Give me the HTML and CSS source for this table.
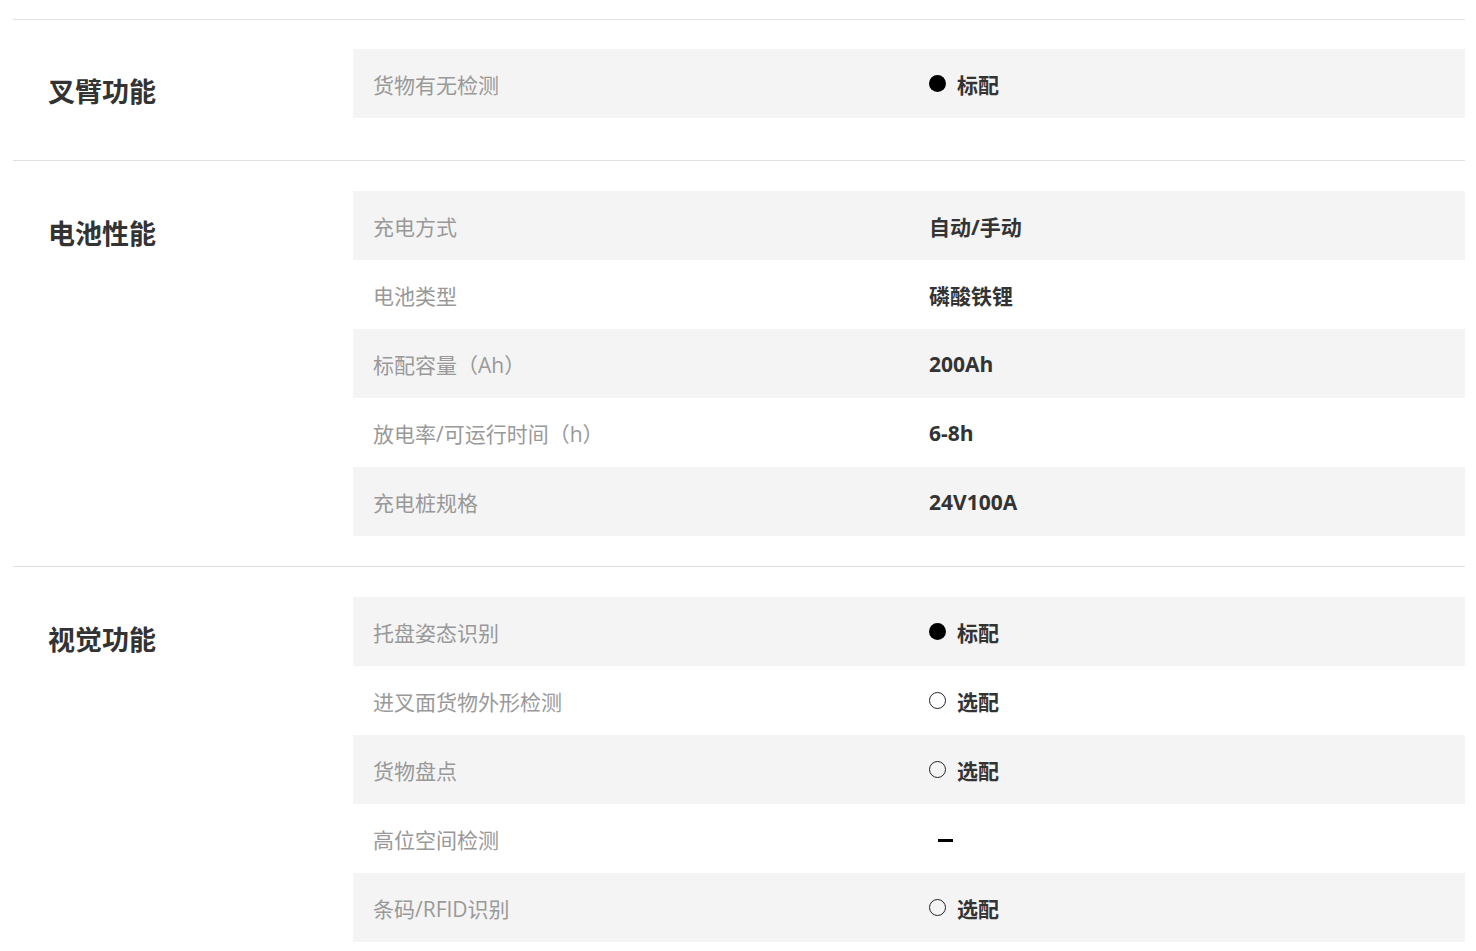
FILE: index.html
```html
<!DOCTYPE html>
<html lang="zh-CN">
<head>
<meta charset="utf-8">
<title>参数</title>
<link rel="stylesheet" href="styles.css">
</head>
<body>
<div class="specs">
  <section class="group group-first">
    <h3 class="group-title">叉臂功能</h3>
    <div class="table">
      <div class="row"><div class="label">货物有无检测</div><div class="value"><span class="dot full"></span>标配</div></div>
    </div>
  </section>
  <section class="group">
    <h3 class="group-title">电池性能</h3>
    <div class="table">
      <div class="row"><div class="label">充电方式</div><div class="value">自动/手动</div></div>
      <div class="row"><div class="label">电池类型</div><div class="value">磷酸铁锂</div></div>
      <div class="row"><div class="label">标配容量（Ah）</div><div class="value">200Ah</div></div>
      <div class="row"><div class="label">放电率/可运行时间（h）</div><div class="value">6-8h</div></div>
      <div class="row"><div class="label">充电桩规格</div><div class="value">24V100A</div></div>
    </div>
  </section>
  <section class="group">
    <h3 class="group-title">视觉功能</h3>
    <div class="table">
      <div class="row"><div class="label">托盘姿态识别</div><div class="value"><span class="dot full"></span>标配</div></div>
      <div class="row"><div class="label">进叉面货物外形检测</div><div class="value"><span class="dot empty"></span>选配</div></div>
      <div class="row"><div class="label">货物盘点</div><div class="value"><span class="dot empty"></span>选配</div></div>
      <div class="row"><div class="label">高位空间检测</div><div class="value"><span class="dash"></span></div></div>
      <div class="row"><div class="label">条码/RFID识别</div><div class="value"><span class="dot empty"></span>选配</div></div>
    </div>
  </section>
</div>
</body>
</html>
```

FILE: styles.css
```css
html, body {
  margin: 0;
  padding: 0;
  background: #fff;
}
body {
  font-family: "Open Sans", "Noto Sans CJK SC", sans-serif;
  color: #333;
}
.specs {
  padding: 19px 11px 0 13px;
}
.group {
  display: grid;
  grid-template-columns: 340px 1fr;
  border-top: 1px solid #e0e0e0;
  padding: 30px 0 30px;
}
.group-first {
  padding-top: 29px;
  padding-bottom: 42px;
}
.group-title {
  margin: 0;
  padding: 22px 0 0 35px;
  font-size: 27px;
  line-height: 40px;
  font-weight: 700;
  color: #333;
  font-family: "Noto Sans CJK SC", sans-serif;
}
.table {
  display: flex;
  flex-direction: column;
}
.row {
  display: grid;
  grid-template-columns: 1fr 1fr;
  height: 69px;
  align-items: center;
}
.row:nth-child(odd) {
  background: #f4f4f4;
}
.label {
  padding-left: 20px;
  font-size: 21px;
  color: #999;
}
.value {
  padding-left: 20px;
  font-size: 21px;
  font-weight: 700;
  color: #333;
  display: flex;
  align-items: center;
}
.dot {
  display: inline-block;
  box-sizing: border-box;
  width: 17px;
  height: 17px;
  border-radius: 50%;
  margin-right: 11px;
}
.dot.full {
  background: #000;
}
.dot.empty {
  border: 1px solid #222;
}
.dash {
  display: inline-block;
  width: 15px;
  height: 3px;
  background: #000;
  margin: 4px 0 0 9px;
}
```
